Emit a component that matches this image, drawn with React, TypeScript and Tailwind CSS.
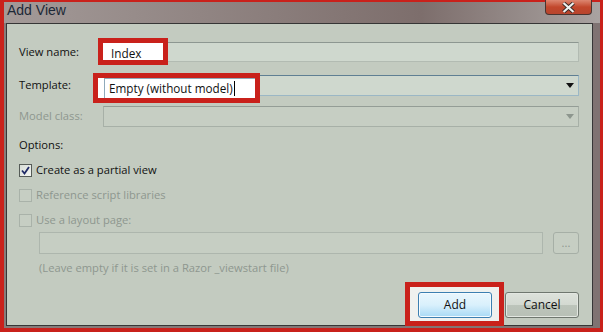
import React from 'react';

const font = "font-['Open_Sans','Liberation_Sans',sans-serif]";

const CheckBox: React.FC<{ checked?: boolean; disabled?: boolean; label: string }> = ({ checked, disabled, label }) => (
  <div className="flex items-center h-[16px] gap-[4px]">
    <div
      className={`w-[13px] h-[13px] border flex items-center justify-center ${
        disabled
          ? 'border-[#a9b2a9] bg-[#c6cec3]'
          : 'border-[#555b57] bg-gradient-to-br from-[#d7ddd6] to-[#f4f6f3]'
      }`}
    >
      {checked && (
        <svg width="9" height="9" viewBox="0 0 9 9">
          <path d="M1 4.5 L3.5 7.5 L8 1" stroke="#1f2a66" strokeWidth="1.8" fill="none" />
        </svg>
      )}
    </div>
    <span className={disabled ? 'text-[#8e978f]' : 'text-[#111]'}>{label}</span>
  </div>
);

const Arrow: React.FC<{ disabled?: boolean }> = ({ disabled }) => (
  <svg width="8" height="5" viewBox="0 0 8 5" className="mr-[4px]">
    <path d="M0 0 H8 L4 5 Z" fill={disabled ? '#8d968e' : '#111'} />
  </svg>
);

export default function App() {
  return (
    <div className={`w-[603px] h-[332px] bg-[#c9211b] pt-[2px] pl-[4px] pr-[3px] pb-[4px] flex ${font} text-[11.2px]`}>
      <div className="flex-1 flex flex-col bg-gradient-to-r from-[#9d9391] via-[#7e6f6e] to-[#8b8280]">
        {/* title bar */}
        <div className="h-[21px] flex justify-between pl-[3px] pr-[8px] bg-gradient-to-r from-[#a39a98] via-[#7d6e6c] via-70% to-[#a9a3a1]">
          <span className="text-[14px] text-[#1c2836] leading-[17px] font-['Liberation_Sans',sans-serif]">Add View</span>
          <div className="-mt-[2px] w-[47px] h-[15px] rounded-b-[4px] border border-t-0 border-[#4a3430] bg-gradient-to-b from-[#dc8670] via-[#c2472c] to-[#b7452d] flex items-center justify-center">
            <svg width="13" height="11" viewBox="0 0 13 11">
              <path d="M1.5 1 L11.5 10 M11.5 1 L1.5 10" stroke="#3a2a28" strokeWidth="4" />
              <path d="M1.5 1 L11.5 10 M11.5 1 L1.5 10" stroke="#eef0ee" strokeWidth="2.2" />
            </svg>
          </div>
        </div>
        <div className="flex-1 flex pl-[2px] pr-[7px] pb-[2px] bg-gradient-to-r from-[#877c7a] to-[#7f7372]">
          {/* client area */}
          <div className="flex-1 flex flex-col border border-[#363636] bg-[#c3cbc0] pl-[12px] pr-[13px] pt-[18px]">
            {/* view name */}
            <div className="flex items-center h-[20px]">
              <span className="w-[84px] text-[#111]">View name:</span>
              <div className="relative flex-1 h-[20px] bg-[#cfd8ce] border border-[#b2bbb2] border-t-[#8d9791]">
                <div className="absolute left-[-6px] top-[-5px] w-[70px] h-[27px] border-[5px] border-[#c9211b] bg-white pl-[8px] pt-[2px] text-[#111] text-[11.8px]">
                  Index
                </div>
              </div>
            </div>
            {/* template */}
            <div className="flex items-center h-[21px] mt-[13px]">
              <span className="w-[84px] text-[#111]">Template:</span>
              <div className="relative flex-1 h-[21px] bg-[#cfd8ce] border border-[#9bb7c5] border-t-[#5f7f93] flex items-center justify-end">
                <Arrow />
                <div className="absolute left-[-11px] top-[-3px] w-[167px] h-[30px] border-[5px] border-[#c9211b] bg-white flex items-center">
                  <div className="ml-[6px] h-full flex-1 border-l border-t border-[#8faabb] flex items-center pl-[4px] text-[11.7px] text-[#111]">
                    Empty (without model)
                    <span className="w-[1px] h-[15px] bg-black ml-[1px]" />
                  </div>
                </div>
              </div>
            </div>
            {/* model class */}
            <div className="flex items-center h-[21px] mt-[10px]">
              <span className="w-[84px] text-[#8e978f]">Model class:</span>
              <div className="flex-1 h-[21px] bg-[#c6cec3] border border-[#a7b0a7] border-t-[#949d96] flex items-center justify-end">
                <Arrow disabled />
              </div>
            </div>
            <div className="h-[16px] mt-[10px] flex items-center text-[#111]">Options:</div>
            <div className="mt-[9px]">
              <CheckBox checked label="Create as a partial view" />
            </div>
            <div className="mt-[9px]">
              <CheckBox disabled label="Reference script libraries" />
            </div>
            <div className="mt-[9px]">
              <CheckBox disabled label="Use a layout page:" />
            </div>
            <div className="flex h-[22px] mt-[4px] ml-[20px] gap-[10px]">
              <div className="flex-1 bg-[#c6cec3] border border-[#adb6ad]" />
              <div className="w-[26px] rounded-[3px] border border-[#a6afa6] bg-[#c6cec3] flex items-center justify-center text-[#8e978f] leading-none">
                ...
              </div>
            </div>
            <div className="h-[16px] mt-[6px] ml-[20px] flex items-center text-[#8e978f]">
              (Leave empty if it is set in a Razor _viewstart file)
            </div>
            {/* buttons */}
            <div className="flex justify-end h-[26px] mt-[16px]">
              <div className="relative w-[74px] h-[26px]">
                <div className="absolute left-[-13px] top-[-10px] w-[99px] h-[44px] border-[5px] border-[#c9211b] bg-[#eff1ef]" />
                <div className="relative w-[74px] h-[26px] rounded-[3px] border border-[#3c7fb1] bg-gradient-to-b from-[#eaf6fd] via-[#d9f0fc] to-[#a7d9f5] shadow-[inset_0_0_0_1px_#f4fbff] flex items-center justify-center text-[12px] text-[#111]">
                  Add
                </div>
              </div>
              <div className="ml-[13px] w-[74px] h-[26px] rounded-[3px] border border-[#6f776f] bg-[linear-gradient(#dde2db_0%,#d3d9d1_50%,#bcc4ba_51%,#b8c0b6_100%)] shadow-[inset_0_0_0_1px_#e3e7e1] flex items-center justify-center text-[12px] text-[#111]">
                Cancel
              </div>
            </div>
          </div>
        </div>
      </div>
    </div>
  );
}
